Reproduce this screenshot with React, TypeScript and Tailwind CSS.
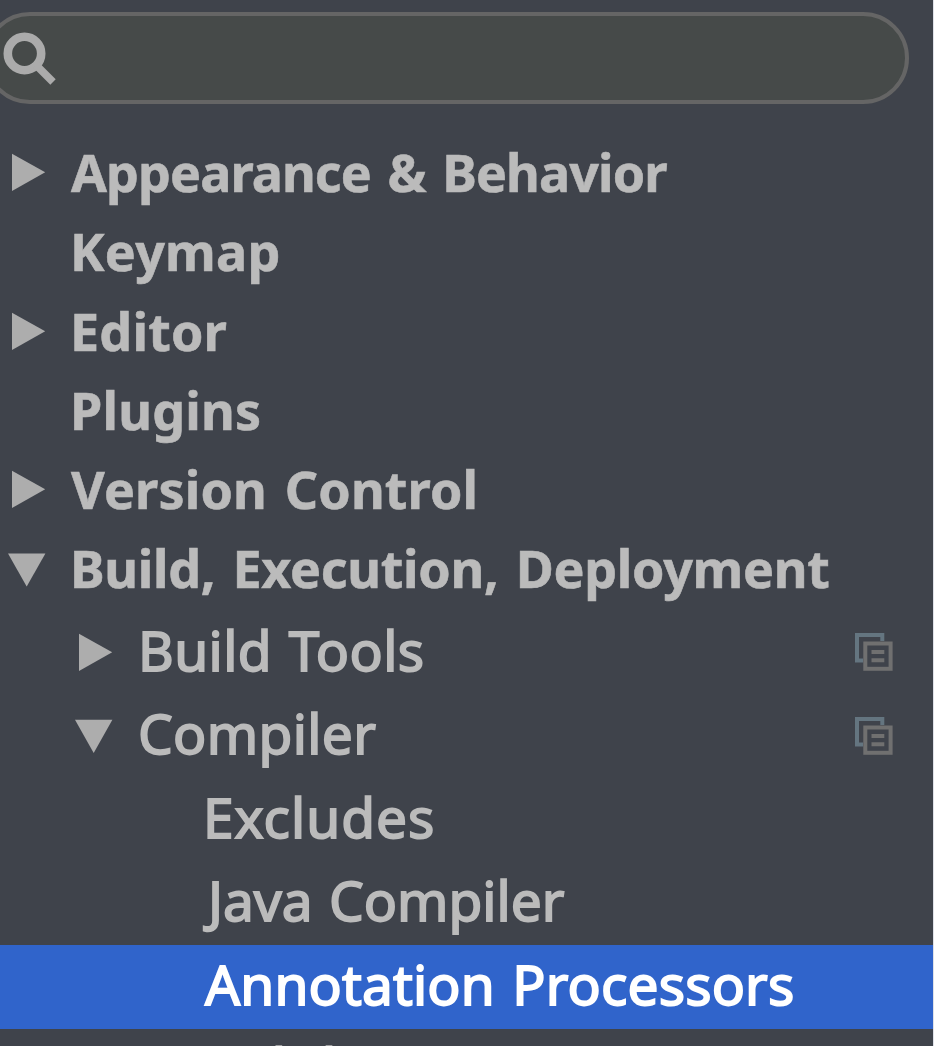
import React from 'react';
import clsx from 'clsx';

type ArrowKind = 'right' | 'down';

interface Item {
  label: string;
  level: 0 | 1 | 2;
  arrow?: ArrowKind;
  copy?: boolean;
  selected?: boolean;
  text: string;
}

const items: Item[] = [
  { label: 'Appearance & Behavior', level: 0, arrow: 'right', text: 'ml-[23px] tracking-[-0.9px] [word-spacing:4px]' },
  { label: 'Keymap', level: 0, text: 'ml-[22px] tracking-[0.3px]' },
  { label: 'Editor', level: 0, arrow: 'right', text: 'ml-[22px] tracking-[0.2px]' },
  { label: 'Plugins', level: 0, text: 'ml-[22px] tracking-[0.2px]' },
  { label: 'Version Control', level: 0, arrow: 'right', text: 'ml-[23px] tracking-[0.15px] [word-spacing:4px]' },
  { label: 'Build, Execution, Deployment', level: 0, arrow: 'down', text: 'ml-[22px] tracking-[-0.3px] [word-spacing:4px]' },
  { label: 'Build Tools', level: 1, arrow: 'right', copy: true, text: 'ml-[23px] tracking-[0.4px] [word-spacing:2px]' },
  { label: 'Compiler', level: 1, arrow: 'down', copy: true, text: 'ml-[23px] tracking-[0.35px]' },
  { label: 'Excludes', level: 2, text: 'ml-[23px] tracking-[1px]' },
  { label: 'Java Compiler', level: 2, text: 'ml-[28px] tracking-[0px] [word-spacing:2px]' },
  { label: 'Annotation Processors', level: 2, selected: true, text: 'ml-[25px] tracking-[0.15px] [word-spacing:3px]' },
  { label: 'Validation', level: 2, text: 'ml-[27px] tracking-[1px]' },
];

function Arrow({ kind, root }: { kind?: ArrowKind; root: boolean }) {
  return (
    <svg className="h-10 w-10 shrink-0 overflow-visible fill-[#adadad]" viewBox="0 0 40 40">
      {kind === 'right' && <path d={root ? 'M4-1.2V36L37.2 17.3Z' : 'M4 .7V38L37.2 19.3Z'} />}
      {kind === 'down' && <path d={root ? 'M0 2.6H37.4L18.7 35.6Z' : 'M0 3.8H37.4L18.7 36.9Z'} />}
    </svg>
  );
}

function CopyIcon() {
  return (
    <svg className="mr-[40px] mb-px ml-auto h-[38px] w-[38px] shrink-0" viewBox="0 0 38 38" fill="none" strokeWidth="4">
      <path d="M27.3 8V2H2V27.5H8" stroke="#647580" />
      <rect x="10.3" y="10.5" width="25.3" height="25.3" stroke="#707070" />
      <path d="M16.5 19H29.3M16.5 27.3H29.3" stroke="#707070" />
    </svg>
  );
}

function Row({ item }: { item: Item }) {
  const root = item.level === 0;
  return (
    <li
      className={clsx(
        'flex shrink-0 items-center',
        root ? 'h-[79.25px] pl-2' : 'h-[83.5px]',
        item.level === 1 && 'pl-[75px]',
        item.level === 2 && 'pl-[140px]',
        item.selected ? 'bg-[#3064cb] text-white' : 'text-[#bbbbbb]',
      )}
    >
      <Arrow kind={item.arrow} root={root} />
      <span
        className={clsx(
          'whitespace-nowrap',
          root
            ? 'pb-[6px] text-[52px]/[70px] font-bold [-webkit-text-stroke:0.6px_currentColor]'
            : 'pb-[6px] text-[55px]/[76px] [-webkit-text-stroke:1.8px_currentColor]',
          item.text,
        )}
      >
        {item.label}
      </span>
      {item.copy && <CopyIcon />}
    </li>
  );
}

export default function App() {
  return (
    <div className="flex h-[1046px] w-[934px] flex-col overflow-hidden border-r border-[#dfe1e8] bg-[#3f434b] pt-3 font-['Noto_Sans',sans-serif]">
      <div className="-ml-4 flex h-[92px] w-[925px] shrink-0 items-center rounded-full border-4 border-[#656565] bg-[#464a49]">
        <svg className="ml-3 h-[60px] w-[60px]" viewBox="0 0 60 60" fill="none" stroke="#ababab">
          <circle cx="24.5" cy="25.5" r="16.7" strokeWidth="8.6" />
          <path d="M36 37L53 54" strokeWidth="7.6" />
        </svg>
      </div>
      <ul className="mt-[31.5px] flex flex-col">
        {items.map((item) => (
          <Row key={item.label} item={item} />
        ))}
      </ul>
    </div>
  );
}
